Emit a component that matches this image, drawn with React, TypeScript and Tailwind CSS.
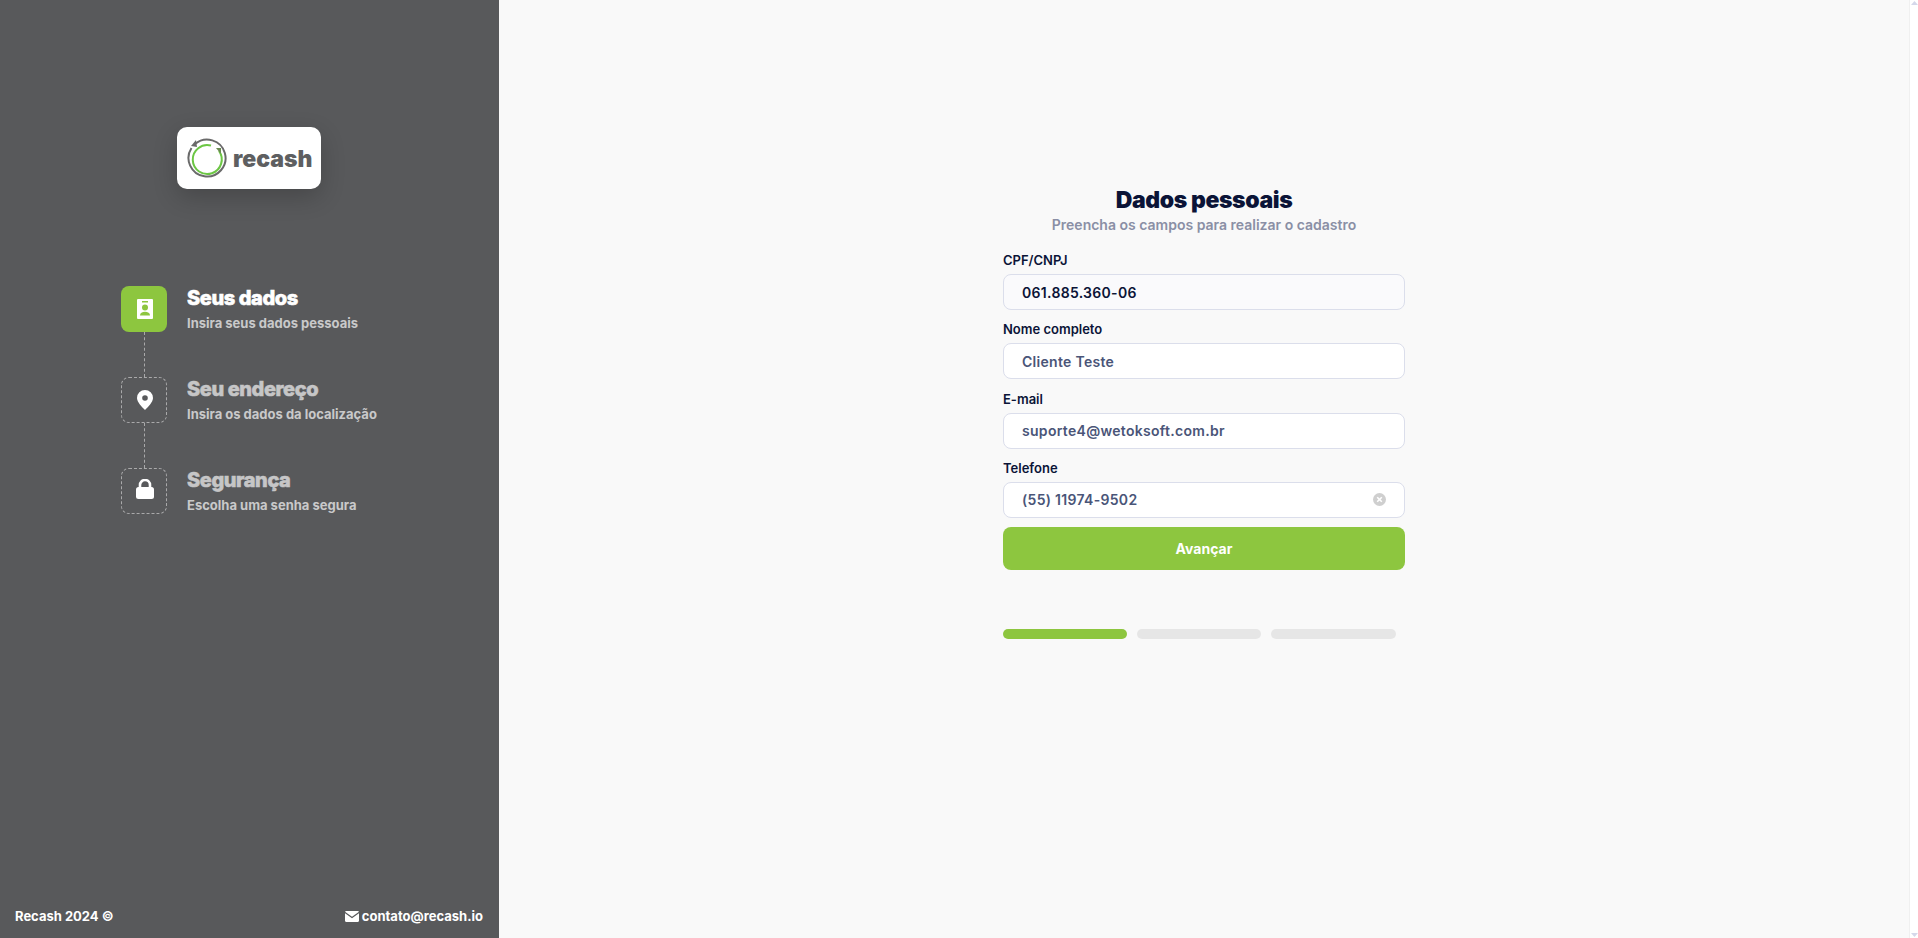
const font = { fontFamily: "Inter, sans-serif" };

function ContactIcon() {
    return (
        <svg width="16" height="20" viewBox="0 0 16 20" fill="none">
            <rect width="16" height="20" rx="1" fill="#fff" />
            <rect x="5" y="2" width="6" height="1.500" fill="#8DC63F" />
            <circle cx="8" cy="8.500" r="3" fill="#8DC63F" />
            <path d="M3 16.500c0-2.600 2.200-3.800 5-3.800s5 1.200 5 3.800z" fill="#8DC63F" />
        </svg>
    );
}

function PinIcon() {
    return (
        <svg width="16" height="20" viewBox="0 0 16 20">
            <path fillRule="evenodd" d="M8 0a8 8 0 0 1 8 8c0 4.200-5 9-8 12C5 17 0 12.200 0 8a8 8 0 0 1 8-8zm0 5.200a2.800 2.800 0 1 0 0 5.600 2.800 2.800 0 0 0 0-5.600z" fill="#fff" />
        </svg>
    );
}

function LockIcon() {
    return (
        <svg width="18" height="20" viewBox="0 0 18 20">
            <path d="M4 9V6a5 5 0 0 1 10 0v3" fill="none" stroke="#fff" strokeWidth="2.600" />
            <rect x="0" y="8" width="18" height="12" rx="2.500" fill="#fff" />
        </svg>
    );
}

function Logo() {
    return (
        <div className="w-[144px] h-[62px] bg-white rounded-[10px] shadow-[0_8px_24px_rgba(0,0,0,0.2)] flex items-center pl-[10px] gap-[6px]">
            <svg width="40" height="42" viewBox="0 0 40 42" fill="none">
                <path d="M8 7a18.500 18.500 0 1 1-3.500 4" stroke="#6a6a6a" strokeWidth="2" />
                <path d="M9 3l1 7-6-1z" fill="#6a6a6a" />
                <path d="M32 14a14.500 14.500 0 1 1-8-5.500" stroke="#6cc644" strokeWidth="2" />
                <path d="M29 11h5v6z" fill="#6a8a50" />
            </svg>
            <span className="text-[23px] font-black text-[#5e5f61] leading-none mt-[2px]">recash</span>
        </div>
    );
}

const steps = [
    { title: "Seus dados", sub: "Insira seus dados pessoais", icon: <ContactIcon />, active: true },
    { title: "Seu endereço", sub: "Insira os dados da localização", icon: <PinIcon />, active: false },
    { title: "Segurança", sub: "Escolha uma senha segura", icon: <LockIcon />, active: false },
];

function Stepper() {
    return (
        <div className="flex flex-col mt-[97px] ml-[121px]">
            {steps.map((s, i) => (
                <div key={s.title}>
                    <div className="flex gap-[20px] h-[46px]">
                        <div className={`w-[46px] h-[46px] rounded-[8px] flex items-center justify-center shrink-0 pl-[2px] ${s.active ? "bg-[#8DC63F]" : "border border-dashed border-[#a9a9aa]"} ${i === 2 ? "pb-[4px]" : ""}`}>
                            {s.icon}
                        </div>
                        <div className="flex flex-col">
                            <span className={`text-[20px] leading-[24px] font-extrabold tracking-[-0.4px] [-webkit-text-stroke:0.6px_currentColor] ${s.active ? "text-white" : "text-[#c6c6c7]"}`}>{s.title}</span>
                            <span className="text-[13px] leading-[20px] mt-[3px] font-bold text-[#c9c9ca]">{s.sub}</span>
                        </div>
                    </div>
                    {i < steps.length - 1 && (
                        <div className="h-[45px] ml-[23px] border-l border-dashed border-[#a9a9aa]" />
                    )}
                </div>
            ))}
        </div>
    );
}

function Field({ label, value, strong, clear }: { label: string; value: string; strong?: boolean; clear?: boolean }) {
    return (
        <div className="flex flex-col">
            <label className="text-[13px] leading-[16px] font-semibold text-[#0b1437] mb-[6px]">{label}</label>
            <div className={`h-[36px] rounded-[8px] border border-[#dbdeeb] flex items-center justify-between pl-[18px] pr-[18px] ${strong ? "bg-[#fafafc]" : "bg-white"}`}>
                <span className={`text-[14px] font-semibold tracking-[0.3px] ${strong ? "text-[#0b1437]" : "text-[#4a5578]"}`}>{value}</span>
                {clear && (
                    <svg width="13" height="13" viewBox="0 0 13 13">
                        <circle cx="6.500" cy="6.500" r="6.500" fill="#cfcfcf" />
                        <path d="M4.200 4.200l4.600 4.600M8.800 4.200l-4.600 4.600" stroke="#fff" strokeWidth="1.600" />
                    </svg>
                )}
            </div>
        </div>
    );
}

export default function App() {
    return (
        <div className="flex h-[938px] w-[1918px] overflow-hidden bg-white" style={font}>
            <aside className="w-[499px] shrink-0 bg-[#58595B] flex flex-col">
                <div className="ml-[177px] mt-[127px]">
                    <Logo />
                </div>
                <Stepper />
                <div className="mt-auto flex items-center justify-between pl-[15px] pr-[16px] pb-[12px] text-[13px] font-bold text-white">
                    <span>Recash 2024 ©</span>
                    <span className="flex items-center gap-[3px]">
                        <svg width="14" height="11" viewBox="0 0 14 11">
                            <path d="M1.200 0h11.600c.5 0 1 .3 1.200.7L7 5.800 0 .7C.2.300.7 0 1.200 0z" fill="#fff" />
                            <path d="M0 2.200v7.600C0 10.500.5 11 1.200 11h11.600c.7 0 1.200-.5 1.200-1.200V2.200L7 7.300z" fill="#fff" />
                        </svg>
                        contato@recash.io
                    </span>
                </div>
            </aside>
            <main className="w-[1410px] shrink-0 bg-[#F9F9F9] flex justify-center">
                <div className="w-[402px] mt-[186px] flex flex-col">
                    <h1 className="text-[23px] leading-[28px] font-black text-[#0b1437] text-center tracking-[-0.4px]">Dados pessoais</h1>
                    <p className="text-[14px] leading-[18px] mt-[2px] font-semibold text-[#8a8fa5] text-center mb-[18px]">Preencha os campos para realizar o cadastro</p>
                    <div className="flex flex-col gap-[11.34px]">
                        <Field label="CPF/CNPJ" value="061.885.360-06" strong />
                        <Field label="Nome completo" value="Cliente Teste" />
                        <Field label="E-mail" value="suporte4@wetoksoft.com.br" />
                        <Field label="Telefone" value="(55) 11974-9502" clear />
                    </div>
                    <button className="mt-[9px] h-[43px] rounded-[8px] bg-[#8DC63F] text-white text-[14px] font-bold">Avançar</button>
                    <div className="flex gap-[10px] mt-[59px]">
                        <div className="w-[124px] h-[10px] rounded-full bg-[#8DC63F]" />
                        <div className="w-[124px] h-[10px] rounded-full bg-[#e6e6e6]" />
                        <div className="w-[125px] h-[10px] rounded-full bg-[#e6e6e6]" />
                    </div>
                </div>
            </main>
            <div className="w-[9px] shrink-0 bg-white border-l border-[#f0f0f0] flex flex-col items-center justify-between py-[1px]">
                <svg width="7" height="4" viewBox="0 0 7 4"><path d="M3.500 0L7 4H0z" fill="#d5d8ea" /></svg>
                <svg width="7" height="4" viewBox="0 0 7 4"><path d="M0 0h7L3.500 4z" fill="#d5d8ea" /></svg>
            </div>
        </div>
    );
}
